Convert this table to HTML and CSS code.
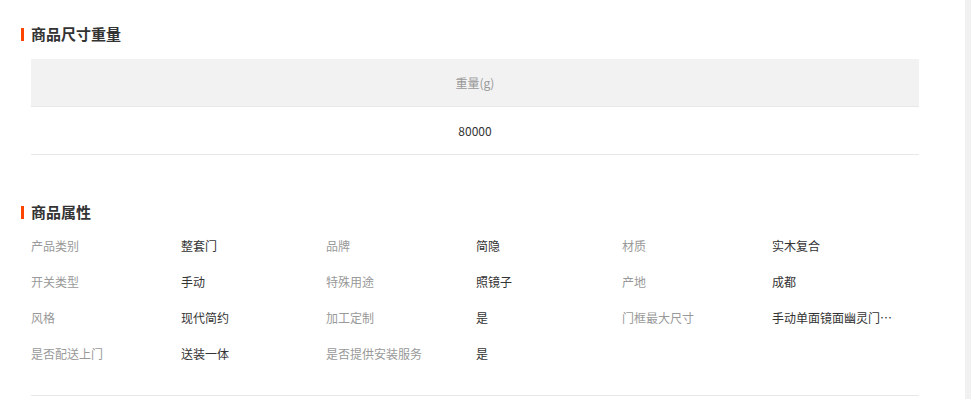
FILE: index.html
```html
<!DOCTYPE html>
<html lang="zh-CN">

<head>
    <meta charset="UTF-8">
    <meta name="viewport" content="width=device-width, initial-scale=1.0">
    <title>商品详情</title>
    <link rel="stylesheet" href="styles.css">
</head>

<body>
    <div class="page">
        <div class="content">
            <h2 class="section-title">商品尺寸重量</h2>

            <table class="size-table">
                <thead>
                    <tr><th>重量(g)</th></tr>
                </thead>
                <tbody>
                    <tr><td>80000</td></tr>
                </tbody>
            </table>

            <h2 class="section-title attr-title">商品属性</h2>

            <div class="attr-grid">
                <div class="attr-label">产品类别</div>
                <div class="attr-value">整套门</div>
                <div class="attr-label">品牌</div>
                <div class="attr-value">简隐</div>
                <div class="attr-label">材质</div>
                <div class="attr-value">实木复合</div>

                <div class="attr-label">开关类型</div>
                <div class="attr-value">手动</div>
                <div class="attr-label">特殊用途</div>
                <div class="attr-value">照镜子</div>
                <div class="attr-label">产地</div>
                <div class="attr-value">成都</div>

                <div class="attr-label">风格</div>
                <div class="attr-value">现代简约</div>
                <div class="attr-label">加工定制</div>
                <div class="attr-value">是</div>
                <div class="attr-label">门框最大尺寸</div>
                <div class="attr-value">手动单面镜面幽灵门隐形门</div>

                <div class="attr-label">是否配送上门</div>
                <div class="attr-value">送装一体</div>
                <div class="attr-label">是否提供安装服务</div>
                <div class="attr-value">是</div>
            </div>
        </div>

        <!-- 右侧滚动条轨道 -->
        <div class="scroll-track"></div>
    </div>
</body>

</html>
```

FILE: styles.css
```css
body {
    margin: 0;
    background: #fff;
    font-family: "Noto Sans CJK SC", "Liberation Sans", sans-serif;
    font-size: 12px;
    color: #333;
}

.page {
    display: flex;
    height: 399px;
    overflow: hidden;
}

.content {
    flex: 1;
    padding: 26px 46px 0 21px;
}

.scroll-track {
    width: 6px;
    background: #f1f1f1;
}

/* 标题左侧的橙色竖条 */
.section-title {
    display: flex;
    align-items: center;
    gap: 7px;
    margin: 0;
    height: 16px;
    font-size: 15px;
    font-weight: bold;
    line-height: 16px;
    color: #333;
}

.section-title::before {
    content: "";
    width: 3px;
    height: 13px;
    background: #ff4400;
}

.attr-title {
    margin-top: 49px;
}

.size-table {
    width: 888px;
    margin: 17px 0 0 10px;
    border-collapse: collapse;
}

.size-table th,
.size-table td {
    height: 47px;
    padding: 0;
    text-align: center;
    border-bottom: 1px solid #e8e8e8;
}

.size-table th {
    background: #f2f2f2;
    font-weight: normal;
    color: #999;
}

.size-table td {
    color: #333;
}

.attr-grid {
    display: grid;
    grid-template-columns: 150px 145px 150px 146px 150px 147px;
    grid-auto-rows: 36px;
    align-items: center;
    width: 888px;
    margin: 7px 0 0 10px;
    padding-bottom: 24px;
    border-bottom: 1px solid #e8e8e8;
}

.attr-label {
    color: #999;
}

.attr-value {
    color: #333;
    padding-right: 20px;
    white-space: nowrap;
    overflow: hidden;
    text-overflow: ellipsis;
}
```
